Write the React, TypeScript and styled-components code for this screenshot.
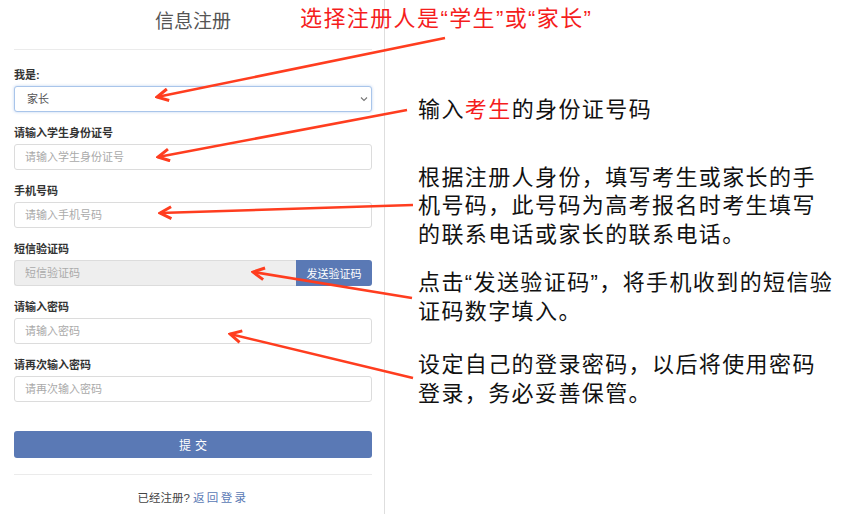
import React from 'react';
import styled, { createGlobalStyle } from 'styled-components';

const GlobalStyle = createGlobalStyle`
  html, body {
    margin: 0;
    padding: 0;
    background: #fff;
  }
  body {
    font-family: "Liberation Sans", "Noto Sans CJK SC", sans-serif;
  }
  * {
    box-sizing: border-box;
  }
`;

const Page = styled.div`
  position: relative;
  display: flex;
  width: 843px;
  min-height: 514px;
  overflow: hidden;
`;

const FormColumn = styled.div`
  width: 385px;
  flex-shrink: 0;
  padding: 0 12px 0 14px;
  border-right: 1px solid #dedede;
`;

const Title = styled.h2`
  margin: 0;
  padding: 9px 0 14px;
  font-size: 19px;
  line-height: 26px;
  font-weight: 400;
  color: #555;
  text-align: center;
`;

const Rule = styled.div<{ $gap: number }>`
  height: 1px;
  background: #ebebeb;
  margin-bottom: ${(p) => p.$gap}px;
`;

const Field = styled.div`
  margin-bottom: 11px;
`;

const Label = styled.label`
  display: block;
  font-size: 11px;
  line-height: 16px;
  font-weight: 700;
  color: #333;
  padding-top: 2px;
  margin-bottom: 3px;
`;

const SelectWrap = styled.div`
  position: relative;
`;

const Select = styled.select`
  appearance: none;
  display: block;
  width: 100%;
  height: 26px;
  padding: 0 24px 0 12px;
  font: inherit;
  font-size: 11px;
  color: #555;
  background: #fff;
  border: 1px solid #a9c5ea;
  border-radius: 3px;
  box-shadow: 0 0 3px rgba(102, 150, 220, 0.45);
  outline: none;
`;

const Chevron = styled.svg`
  position: absolute;
  right: 4px;
  top: 10px;
  pointer-events: none;
`;

const Input = styled.input<{ $disabled?: boolean }>`
  display: block;
  width: 100%;
  height: 26px;
  padding: 0 10px;
  font: inherit;
  font-size: 11px;
  color: #555;
  background: ${(p) => (p.$disabled ? '#eeeeee' : '#fff')};
  border: 1px solid #dcdcdc;
  border-radius: 3px;
  outline: none;

  &::placeholder {
    color: #aaa;
  }
`;

const InputGroup = styled.div`
  display: flex;

  ${Input} {
    flex: 1;
    border-right: none;
    border-radius: 3px 0 0 3px;
  }
`;

const AddonButton = styled.button`
  width: 76px;
  height: 26px;
  flex-shrink: 0;
  border: none;
  border-radius: 0 3px 3px 0;
  background: #5a79b5;
  color: #fff;
  font: inherit;
  font-size: 11px;
  padding: 0;
`;

const SubmitButton = styled.button`
  display: block;
  width: 100%;
  height: 27px;
  margin-top: 29px;
  margin-bottom: 16px;
  border: none;
  border-radius: 3px;
  background: #5a79b5;
  color: #fff;
  font: inherit;
  font-size: 12px;
  letter-spacing: 4px;
  padding: 0 0 0 4px;
`;

const Footer = styled.p`
  margin: 0;
  text-align: center;
  font-size: 11.5px;
  line-height: 20px;
  color: #444;
`;

const FooterLink = styled.a`
  color: #5a79b5;
  letter-spacing: 2.4px;
  text-decoration: none;
  margin-left: 3px;
`;

const NotesColumn = styled.div`
  padding-left: 33px;
`;

const Note = styled.p<{ $top: number }>`
  margin: ${(p) => p.$top}px 0 0;
  width: 420px;
  font-size: 22px;
  line-height: 28.5px;
  letter-spacing: 1.4px;
  color: #111;
`;

const Red = styled.span`
  color: #f51d1d;
`;

const Callout = styled.div`
  position: absolute;
  left: 300px;
  top: 5px;
  font-size: 22px;
  line-height: 28.5px;
  letter-spacing: 1.4px;
  color: #f51d1d;
  white-space: nowrap;
`;

const ArrowLayer = styled.svg`
  position: absolute;
  left: 0;
  top: 0;
  pointer-events: none;
`;

const arrows = [
  { x1: 445, y1: 38, x2: 157, y2: 97 },
  { x1: 407, y1: 110, x2: 158, y2: 157 },
  { x1: 413, y1: 205, x2: 160, y2: 213 },
  { x1: 412, y1: 298, x2: 253, y2: 272 },
  { x1: 413, y1: 378, x2: 230, y2: 334 },
];

const App: React.FC = () => {
  return (
    <>
      <GlobalStyle />
      <Page>
        <FormColumn>
          <Title>信息注册</Title>
          <Rule $gap={15} />

          <Field>
            <Label>我是:</Label>
            <SelectWrap>
              <Select defaultValue="parent">
                <option value="student">学生</option>
                <option value="parent">家长</option>
              </Select>
              <Chevron width="8" height="6" viewBox="0 0 8 6">
                <path d="M1 1.5 L4 4.5 L7 1.5" fill="none" stroke="#777" strokeWidth="1.1" />
              </Chevron>
            </SelectWrap>
          </Field>

          <Field>
            <Label>请输入学生身份证号</Label>
            <Input placeholder="请输入学生身份证号" />
          </Field>

          <Field>
            <Label>手机号码</Label>
            <Input placeholder="请输入手机号码" />
          </Field>

          <Field>
            <Label>短信验证码</Label>
            <InputGroup>
              <Input $disabled placeholder="短信验证码" />
              <AddonButton>发送验证码</AddonButton>
            </InputGroup>
          </Field>

          <Field>
            <Label>请输入密码</Label>
            <Input type="password" placeholder="请输入密码" />
          </Field>

          <Field>
            <Label>请再次输入密码</Label>
            <Input type="password" placeholder="请再次输入密码" />
          </Field>

          <SubmitButton>提交</SubmitButton>
          <Rule $gap={13} />
          <Footer>
            已经注册?<FooterLink href="#">返回登录</FooterLink>
          </Footer>
        </FormColumn>

        <NotesColumn>
          <Note $top={96}>
            输入<Red>考生</Red>的身份证号码
          </Note>
          <Note $top={39}>
            根据注册人身份，填写考生或家长的手机号码，此号码为高考报名时考生填写的联系电话或家长的联系电话。
          </Note>
          <Note $top={20}>点击“发送验证码”，将手机收到的短信验证码数字填入。</Note>
          <Note $top={25}>设定自己的登录密码，以后将使用密码登录，务必妥善保管。</Note>
        </NotesColumn>

        <Callout>选择注册人是“学生”或“家长”</Callout>

        <ArrowLayer width="843" height="514" viewBox="0 0 843 514">
          <defs>
            <marker
              id="head"
              viewBox="0 0 14 14"
              refX="12.5"
              refY="7"
              markerWidth="15"
              markerHeight="15"
              markerUnits="userSpaceOnUse"
              orient="auto"
            >
              <path d="M2 1.5 L12.5 7 L2 12.5" fill="none" stroke="#ff3d1f" strokeWidth="2.8" />
            </marker>
          </defs>
          {arrows.map((a, i) => (
            <line
              key={i}
              x1={a.x1}
              y1={a.y1}
              x2={a.x2}
              y2={a.y2}
              stroke="#ff3d1f"
              strokeWidth="2.6"
              markerEnd="url(#head)"
            />
          ))}
        </ArrowLayer>
      </Page>
    </>
  );
};

export default App;
